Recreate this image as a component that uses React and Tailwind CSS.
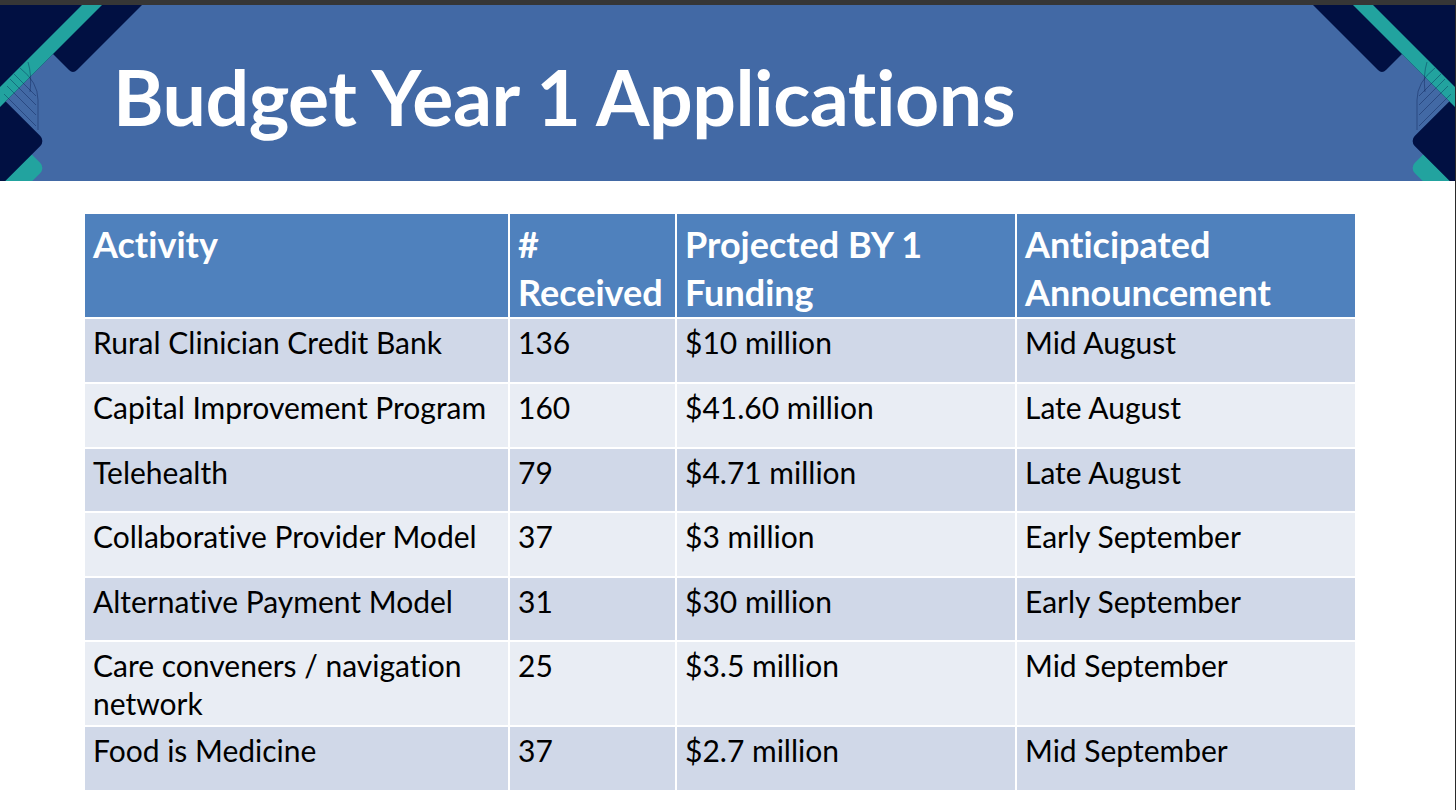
import React from "react";

const rows = [
  ["Rural Clinician Credit Bank", "136", "$10 million", "Mid August"],
  ["Capital Improvement Program", "160", "$41.60 million", "Late August"],
  ["Telehealth", "79", "$4.71 million", "Late August"],
  ["Collaborative Provider Model", "37", "$3 million", "Early September"],
  ["Alternative Payment Model", "31", "$30 million", "Early September"],
  [["Care conveners / navigation", "network"], "25", "$3.5 million", "Mid September"],
  ["Food is Medicine", "37", "$2.7 million", "Mid September"],
];

const headers = [
  ["Activity"],
  ["#", "Received"],
  ["Projected BY 1", "Funding"],
  ["Anticipated", "Announcement"],
];

// corner ornament, drawn for the left side and mirrored for the right
function Corner({ className }) {
  return (
    <svg
      className={className}
      width="150"
      height="176"
      viewBox="0 5 150 176"
      xmlns="http://www.w3.org/2000/svg"
    >
      <rect x="-32" y="136" width="64" height="64" rx="7" transform="rotate(45 0 168)" fill="#22a39f" />
      <rect x="-32" y="109" width="64" height="64" rx="7" transform="rotate(45 0 141)" fill="#011042" />
      <path d="M0 5 L142 5 L77 70 Q73 74 69 70 L53 54 L0 107 Z" fill="#011042" />
      <path d="M82 5 L102 5 L0 107 L0 87 Z" fill="#22a39f" />
      <g stroke="#011042" strokeOpacity="0.45" strokeWidth="0.8" fill="none">
        <path d="M14 74 L36 96" />
        <path d="M10 79 L36 105" />
        <path d="M7 86 L36 115" />
        <path d="M4 94 L36 126" />
        <path d="M20 68 Q38 82 38 100 L38 130" />
        <path d="M28 62 Q32 75 30 92" />
      </g>
    </svg>
  );
}

export default function App() {
  return (
    <div
      className="w-[1456px] h-[810px] bg-white border-t-[5px] border-t-[#363636] border-r border-r-[#2a2a2a] overflow-hidden [font-variant-ligatures:none]"
      style={{ fontFamily: "Lato, 'Open Sans', sans-serif" }}
    >
      <div className="relative h-[176px] bg-[#4269a5]">
        <Corner className="absolute left-0 top-0" />
        <Corner className="absolute right-0 top-0 -scale-x-100" />
        <h1 className="pl-[113px] pt-[53px] text-[77px] leading-none font-bold text-white tracking-[-0.5px]">
          Budget Year 1 Applications
        </h1>
      </div>

      <div className="ml-[85px] mt-[33px] w-[1270px] grid grid-cols-[423px_165px_338px_338px] grid-rows-[103px_63px_63px_62px_63px_62px_83px_63px] gap-[2px] bg-white">
        {headers.map((h, i) => (
          <div key={i} className="bg-[#4f81bd] pl-2 pt-[6px] text-white font-bold text-[36px] leading-[48px]">
            {h.map((line, j) => (
              <div key={j}>{line}</div>
            ))}
          </div>
        ))}
        {rows.map((r, i) =>
          r.map((cell, j) => (
            <div
              key={i + "-" + j}
              className={
                "pl-2 pt-[4px] text-black text-[30px] leading-[38px] " +
                (i % 2 === 0 ? "bg-[#d0d8e8]" : "bg-[#e9edf4]")
              }
            >
              {Array.isArray(cell) ? cell.map((line, k) => <div key={k}>{line}</div>) : cell}
            </div>
          ))
        )}
      </div>
    </div>
  );
}
